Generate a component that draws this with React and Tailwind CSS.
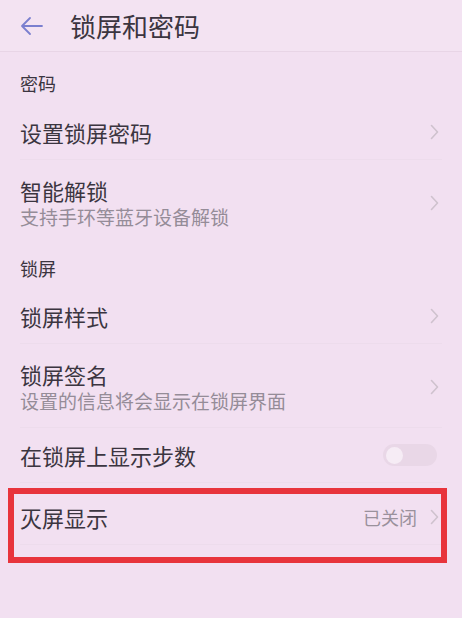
const font = { fontFamily: '"Noto Sans CJK SC", "Noto Sans", sans-serif' };

const Chevron = () => (
  <svg width="9" height="16" viewBox="0 0 9 16" fill="none" className="shrink-0">
    <path d="M1.5 1.5L7.5 8L1.5 14.5" stroke="#cfc2ce" strokeWidth="1.6" strokeLinecap="round" strokeLinejoin="round" />
  </svg>
);

const SectionHeader = ({ title, h }) => (
  <div className={`flex items-end px-5 pb-[9px] ${h}`}>
    <span className="text-[18px] leading-[24px] text-[#3b3540]">{title}</span>
  </div>
);

const Row = ({ title, sub, right, last, h = "h-[56px]", pad = "pt-[16px] pb-[16px]" }) => (
  <div className="px-5">
    <div
      className={`flex items-center justify-between ${sub ? pad : h} ${
        last ? "" : "border-b border-[#eddcec]"
      }`}
    >
      <div className="flex flex-col">
        <span className="text-[22px] leading-[28px] text-[#3b3540]">{title}</span>
        {sub && <span className="text-[19px] leading-[24px] text-[#958c98] mt-[1px]">{sub}</span>}
      </div>
      <div className="flex items-center gap-[13px] pr-[3px]">{right ?? <Chevron />}</div>
    </div>
  </div>
);

export default function App() {
  return (
    <div className="relative w-[462px] h-[618px] overflow-hidden bg-[#f2e0f1]" style={font}>
      <div className="h-[52px] flex items-center px-5 gap-[26px] border-b border-[#e8d5e6] bg-[#f3e3f2]">
        <svg width="24" height="20" viewBox="0 0 24 20" fill="none">
          <path d="M22 10H2.5M10 2L2 10L10 18" stroke="#7a7fcf" strokeWidth="1.8" strokeLinecap="round" strokeLinejoin="round" />
        </svg>
        <span className="text-[26px] leading-[34px] text-[#3b3540]">锁屏和密码</span>
      </div>

      <SectionHeader title="密码" h="h-[52px]" />
      <Row title="设置锁屏密码" />
      <Row title="智能解锁" sub="支持手环等蓝牙设备解锁" last />

      <SectionHeader title="锁屏" h="h-[44px]" />
      <Row title="锁屏样式" h="h-[55px]" />
      <Row title="锁屏签名" sub="设置的信息将会显示在锁屏界面" pad="pt-[16px] pb-[14px]" />
      <Row
        title="在锁屏上显示步数"
        h="h-[55px]"
        right={
          <div className="w-[54px] h-[22px] rounded-full bg-[#e9d7e7] flex items-center px-[3px] mr-[2px]">
            <div className="w-[17px] h-[17px] rounded-full bg-[#f6ecf5]" />
          </div>
        }
      />
      <div className="h-[6px]" />
      <Row
        title="灭屏显示"
        right={
          <>
            <span className="text-[18px] leading-[24px] text-[#9a919c]">已关闭</span>
            <Chevron />
          </>
        }
      />

      <div className="absolute left-[8px] top-[488px] w-[439px] h-[75px] border-[6px] border-[#e8343c] pointer-events-none" />
    </div>
  );
}
